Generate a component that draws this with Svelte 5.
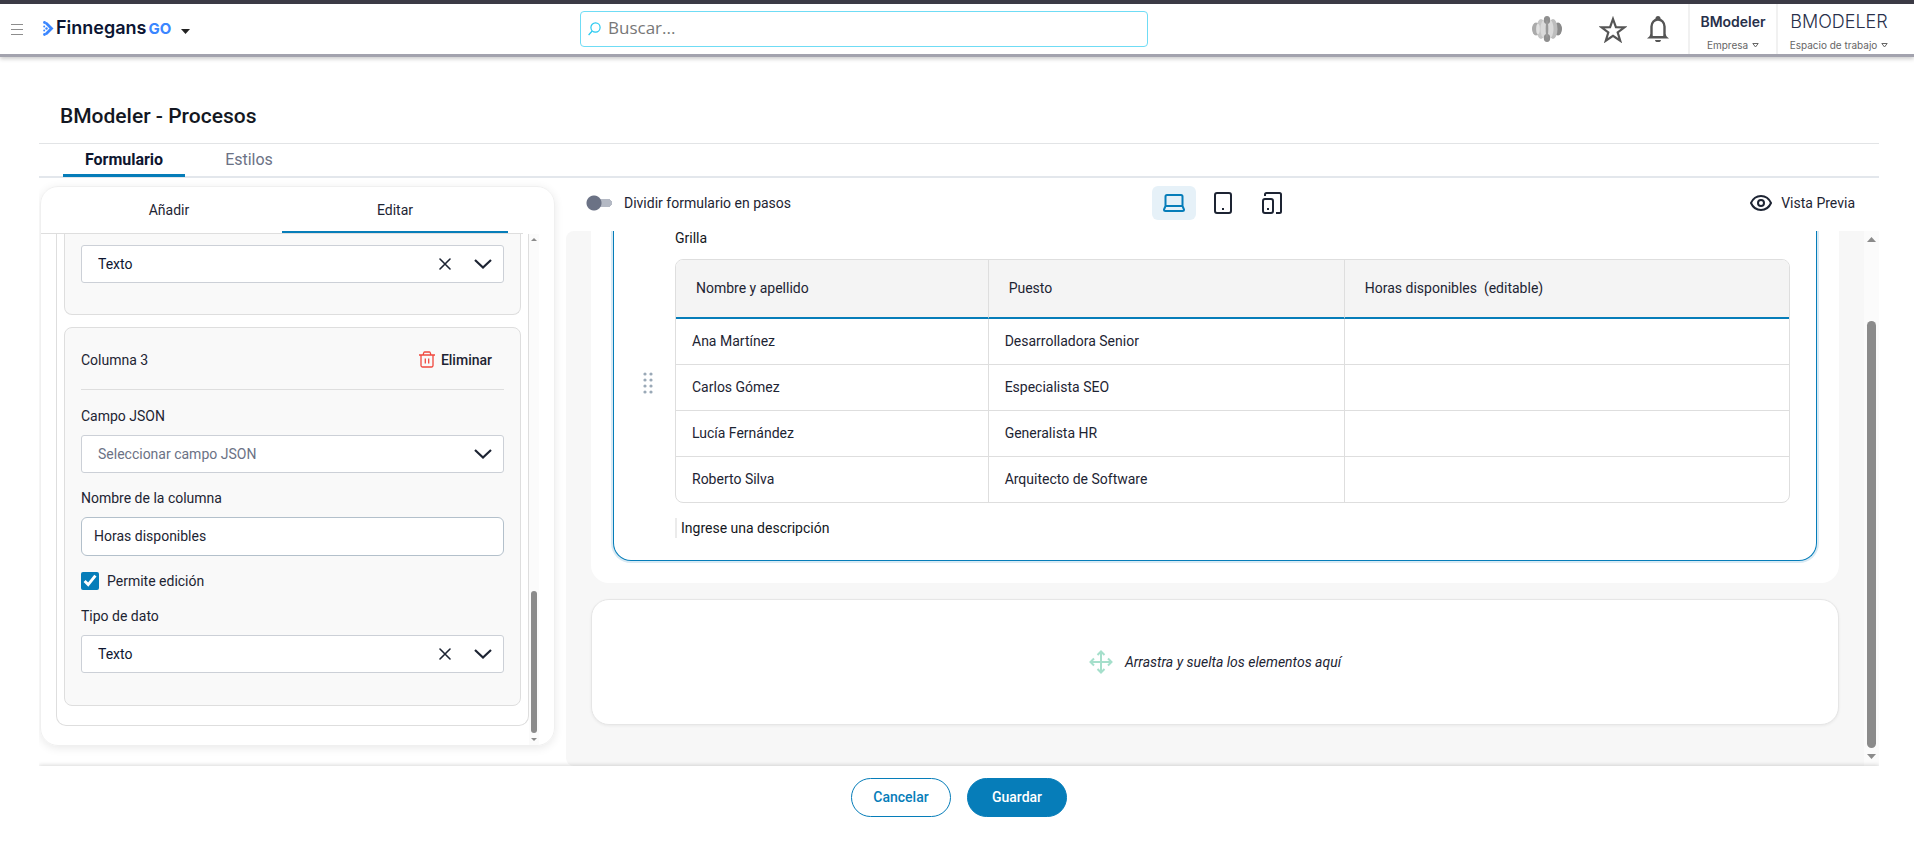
<script lang="ts">
	const topTabs = ['Formulario', 'Estilos'];
	const panelTabs = ['Añadir', 'Editar'];
	const devices = ['laptop', 'tablet', 'devices'];

	const rows = [
		{ name: 'Ana Martínez', role: 'Desarrolladora Senior' },
		{ name: 'Carlos Gómez', role: 'Especialista SEO' },
		{ name: 'Lucía Fernández', role: 'Generalista HR' },
		{ name: 'Roberto Silva', role: 'Arquitecto de Software' }
	];

	let activeTop = $state('Formulario');
	let activePanel = $state('Editar');
	let device = $state('laptop');
	let split = $state(false);
	let columnName = $state('Horas disponibles');
	let editable = $state(true);
	let jsonField = $state('');
	let prevType = $state('texto');
	let dataType = $state('texto');
</script>

{#snippet chevron()}
	<svg class="chevron" width="18" height="10" viewBox="0 0 18 10" aria-hidden="true">
		<path d="M1 1l8 7.500 8-7.500" fill="none" stroke="currentColor" stroke-width="2.200" />
	</svg>
{/snippet}

{#snippet cross()}
	<svg width="12" height="12" viewBox="0 0 12 12" aria-hidden="true">
		<path d="M1 1l10 10M11 1L1 11" stroke="currentColor" stroke-width="1.6" stroke-linecap="round" />
	</svg>
{/snippet}

<header class="topbar">
	<div class="brand">
		<button class="plain menu" aria-label="Menú">
			<svg width="12" height="11" viewBox="0 0 12 11"><path d="M0 .5h12M0 5.500h12M0 10.500h12" stroke="#8d8d8d" /></svg>
		</button>
		<button class="plain logo" aria-label="Finnegans GO">
			<svg width="11" height="15" viewBox="0 0 11 15">
				<path d="M3.500 2.500l5 5-5 5" fill="none" stroke="#3a86ff" stroke-width="2.800" stroke-linecap="round" />
				<circle cx="1.500" cy="1.500" r="1.400" fill="#3a86ff" />
				<circle cx="1.200" cy="5.500" r="1" fill="#3a86ff" />
				<circle cx="3.500" cy="7.500" r="1.200" fill="#3a86ff" />
				<circle cx="1.200" cy="9.500" r="1" fill="#3a86ff" />
				<circle cx="1.500" cy="13.500" r="1.400" fill="#3a86ff" />
			</svg>
			<span class="logo-name">Finnegans</span><span class="logo-go">GO</span>
			<svg class="caret" width="9" height="5" viewBox="0 0 9 5"><path d="M0 0h9L4.500 5z" fill="#222" /></svg>
		</button>
	</div>

	<label class="search">
		<svg width="13" height="14" viewBox="0 0 13 14" aria-hidden="true">
			<circle cx="7.500" cy="5.500" r="4.600" fill="none" stroke="#27c9f0" stroke-width="1.200" />
			<path d="M4.200 9L.6 13" stroke="#27c9f0" stroke-width="1.200" />
		</svg>
		<input type="search" placeholder="Buscar..." aria-label="Buscar" />
	</label>

	<div class="account">
		<svg class="orb" width="30" height="26" viewBox="0 0 30 26" aria-hidden="true">
			<ellipse cx="4" cy="13" rx="4" ry="6.500" fill="#ababab" />
			<ellipse cx="26" cy="13" rx="4" ry="6.500" fill="#8a8a8a" />
			<ellipse cx="9" cy="13" rx="4.500" ry="10" fill="#c6c6c6" />
			<ellipse cx="21" cy="13" rx="4.500" ry="10" fill="#bdbdbd" />
			<ellipse cx="6" cy="13" rx="1.800" ry="5" fill="#e2e2e2" />
			<ellipse cx="12" cy="13" rx="3.500" ry="9" fill="#dadada" />
			<ellipse cx="18" cy="13" rx="3.500" ry="9" fill="#dadada" />
			<ellipse cx="15" cy="4" rx="3.200" ry="4" fill="#8f8f8f" />
			<ellipse cx="15" cy="22" rx="3.200" ry="4" fill="#8f8f8f" />
			<ellipse cx="15" cy="13" rx="1.300" ry="9" fill="#999" />
		</svg>
		<button class="plain star" aria-label="Favoritos">
			<svg width="28" height="27" viewBox="0 0 28 27">
				<path d="M14 3l2.900 8.100 8.600.2-6.800 5.200 2.500 8.200L14 19.800l-7.200 4.900 2.500-8.200-6.800-5.200 8.600-.2z" fill="none" stroke="#555" stroke-width="2.200" />
			</svg>
		</button>
		<button class="plain bell" aria-label="Notificaciones">
			<svg width="22" height="26" viewBox="0 0 22 26">
				<path d="M4.500 20V10.500a6.500 7 0 0 1 13 0V20" fill="none" stroke="#555" stroke-width="2.400" />
				<path d="M0 22.400c1.500-1 3-2.200 3.300-4.400l2.400 2h10.600l2.400-2c.3 2.200 1.800 3.400 3.300 4.400z" fill="#555" />
				<path d="M8.500 4V2.500a2.500 2.500 0 0 1 5 0V4zM8 24h6a3 2.200 0 0 1-6 0z" fill="#555" />
			</svg>
		</button>
		<button class="plain picker company">
			<strong>BModeler</strong>
			<small>Empresa <svg width="7" height="5" viewBox="0 0 7 5"><path d="M.8.5h5.400L3.500 4z" fill="none" stroke="currentColor" /></svg></small>
		</button>
		<button class="plain picker workspace">
			<span>BMODELER</span>
			<small>Espacio de trabajo <svg width="7" height="5" viewBox="0 0 7 5"><path d="M.8.5h5.400L3.500 4z" fill="none" stroke="currentColor" /></svg></small>
		</button>
	</div>
</header>

<main class="page">
	<h1>BModeler - Procesos</h1>

	<nav class="top-tabs">
		{#each topTabs as tab}
			<button class="plain" class:active={activeTop === tab} onclick={() => (activeTop = tab)}>{tab}</button>
		{/each}
	</nav>

	<div class="workarea">
		<aside class="panel">
			<div class="panel-tabs">
				{#each panelTabs as tab}
					<button class="plain" class:active={activePanel === tab} onclick={() => (activePanel = tab)}>{tab}</button>
				{/each}
			</div>
			<div class="panel-body">
				<div class="columns">
					<section class="column-card first">
						<div class="select">
							<select aria-label="Tipo de dato" bind:value={prevType}>
								<option value="texto">Texto</option>
							</select>
							<span class="select-icons">{@render cross()}{@render chevron()}</span>
						</div>
					</section>

					<section class="column-card">
						<div class="column-head">
							<span>Columna 3</span>
							<button class="plain remove">
								<svg width="16" height="17" viewBox="0 0 16 17" aria-hidden="true">
									<path d="M0 4h16M2 4v10.500a1.500 1.500 0 0 0 1.500 1.500h9a1.500 1.500 0 0 0 1.500-1.500V4M4 4l.8-2.400Q5 1 5.800 1h4.400q.8 0 1 .6L12 4M6.300 7.500v5M9.700 7.500v5" fill="none" stroke="#f0483e" stroke-width="1.300" />
								</svg>
								Eliminar
							</button>
						</div>

						<label class="field-label" for="json-field">Campo JSON</label>
						<div class="select">
							<select id="json-field" class="empty" bind:value={jsonField}>
								<option value="">Seleccionar campo JSON</option>
							</select>
							<span class="select-icons">{@render chevron()}</span>
						</div>

						<label class="field-label" for="column-name">Nombre de la columna</label>
						<input id="column-name" class="text-input" type="text" bind:value={columnName} />

						<label class="check">
							<input type="checkbox" bind:checked={editable} />
							<span>Permite edición</span>
						</label>

						<label class="field-label" for="data-type">Tipo de dato</label>
						<div class="select">
							<select id="data-type" bind:value={dataType}>
								<option value="texto">Texto</option>
							</select>
							<span class="select-icons">{@render cross()}{@render chevron()}</span>
						</div>
					</section>
				</div>
				<div class="scrollbar thin" aria-hidden="true">
					<i class="up"></i>
					<i class="thumb"></i>
					<i class="down"></i>
				</div>
			</div>
		</aside>

		<section class="designer">
			<div class="toolbar">
				<label class="switch">
					<input type="checkbox" role="switch" bind:checked={split} />
					<span>Dividir formulario en pasos</span>
				</label>
				<div class="devices">
					{#each devices as item}
						<button class="plain" class:active={device === item} aria-label={item} onclick={() => (device = item)}>
							{#if item === 'laptop'}
								<svg width="22" height="18" viewBox="0 0 22 18">
									<path d="M4 1h14a1.500 1.500 0 0 1 1.500 1.500V12h-17V2.500A1.500 1.500 0 0 1 4 1zM2.500 12h17l1.500 3.500q0 1.500-1.500 1.500h-17Q1 17 1 15.500z" fill="none" stroke="currentColor" stroke-width="2" />
								</svg>
							{:else if item === 'tablet'}
								<svg width="18" height="22" viewBox="0 0 18 22">
									<rect x="1" y="1" width="16" height="20" rx="2" fill="none" stroke="currentColor" stroke-width="2" />
									<path d="M8 16h2v2H8z" fill="currentColor" />
								</svg>
							{:else}
								<svg width="20" height="22" viewBox="0 0 20 22">
									<rect x="1" y="7" width="10" height="14" rx="2" fill="none" stroke="currentColor" stroke-width="2" />
									<path d="M3 4V2.500Q3 1 4.500 1h13Q19 1 19 2.500v17q0 1.500-1.500 1.500H14" fill="none" stroke="currentColor" stroke-width="2" />
									<path d="M5 16h2v2H5z" fill="currentColor" />
								</svg>
							{/if}
						</button>
					{/each}
				</div>
				<button class="plain preview">
					<svg width="22" height="16" viewBox="0 0 22 16" aria-hidden="true">
						<path d="M1 8c2-4.500 5.500-7 10-7s8 2.500 10 7c-2 4.500-5.500 7-10 7S3 12.500 1 8z" fill="none" stroke="currentColor" stroke-width="2" />
						<circle cx="11" cy="8" r="3" fill="none" stroke="currentColor" stroke-width="2" />
					</svg>
					Vista Previa
				</button>
			</div>

			<div class="canvas">
				<div class="sheets">
					<div class="sheet">
						<div class="block">
							<svg class="grip" width="10" height="22" viewBox="0 0 10 22" aria-hidden="true">
								{#each [2, 8, 14, 20] as y}
									<circle cx="2" cy={y} r="1.600" fill="#9aa9b7" />
									<circle cx="8" cy={y} r="1.600" fill="#9aa9b7" />
								{/each}
							</svg>
							<div class="block-content">
								<div class="block-title">Grilla</div>
								<table>
									<colgroup><col class="c-name" /><col class="c-role" /><col /></colgroup>
									<thead>
										<tr>
											<th>Nombre y apellido</th>
											<th>Puesto</th>
											<th>Horas disponibles &nbsp;(editable)</th>
										</tr>
									</thead>
									<tbody>
										{#each rows as row}
											<tr>
												<td>{row.name}</td>
												<td>{row.role}</td>
												<td></td>
											</tr>
										{/each}
									</tbody>
								</table>
								<div class="description">Ingrese una descripción</div>
							</div>
						</div>
					</div>

					<div class="dropzone">
						<svg width="24" height="24" viewBox="0 0 24 24" aria-hidden="true">
							<path d="M12 2v20M2 12h20M8.500 5L12 1.500 15.500 5M8.500 19l3.500 3.500 3.500-3.500M5 8.500L1.500 12 5 15.500M19 8.500l3.500 3.500-3.500 3.500" fill="none" stroke="#a5dfcb" stroke-width="2" />
						</svg>
						<em>Arrastra y suelta los elementos aquí</em>
					</div>
				</div>
				<div class="scrollbar" aria-hidden="true">
					<i class="up"></i>
					<i class="thumb"></i>
					<i class="down"></i>
				</div>
			</div>
		</section>
	</div>

	<footer class="actions">
		<button class="btn">Cancelar</button>
		<button class="btn primary">Guardar</button>
	</footer>
</main>

<style>
	:global(body) {
		margin: 0;
		background: #fff;
		color: #1d2433;
		font-family: Roboto, 'Liberation Sans', sans-serif;
		font-size: 14px;
		line-height: 20px;
	}

	:global(*) {
		box-sizing: border-box;
	}

	svg {
		display: block;
		flex: none;
	}

	button,
	input,
	select {
		font: inherit;
		color: inherit;
	}

	.plain {
		border: 0;
		padding: 0;
		background: none;
		cursor: pointer;
	}

	/* ── Top bar ── */
	.topbar {
		display: grid;
		grid-template-columns: 569px 568px 1fr;
		align-items: center;
		height: 57px;
		padding: 0 18px 0 11px;
		border-top: 4px solid #3b3a45;
		border-bottom: 3px solid #a3a3ae;
		box-shadow: 0 2px 4px rgba(0, 0, 0, 0.2);
	}

	.brand {
		display: flex;
		align-items: center;
		gap: 20px;
	}

	.logo {
		display: flex;
		align-items: center;
		padding-bottom: 2px;
		font-family: Inter, sans-serif;
		font-size: 18px;
		font-weight: 600;
	}

	.logo-name {
		margin-left: 2px;
		color: #0b1533;
	}

	.logo-go {
		margin: 2px 0 0 2px;
		font-size: 15px;
		font-weight: 700;
		color: #3a86ff;
	}

	.caret {
		margin: 6px 0 0 10px;
	}

	.search {
		display: flex;
		align-items: center;
		gap: 7px;
		height: 36px;
		padding-left: 7px;
		border: 1px solid #6fdcf5;
		border-radius: 4px;
	}

	.search input {
		flex: 1;
		min-width: 0;
		padding: 0 0 2px;
		border: 0;
		outline: 0;
		background: none;
		font-family: 'Open Sans', sans-serif;
		font-size: 17px;
	}

	.search input::placeholder {
		color: #777;
		opacity: 1;
	}

	.account {
		display: flex;
		align-items: center;
		justify-content: flex-end;
		height: 50px;
		font-family: Inter, sans-serif;
	}

	.star {
		margin-left: 37px;
	}

	.bell {
		margin: 0 19px 0 20px;
	}

	.picker {
		display: flex;
		flex-direction: column;
		align-items: center;
		align-self: stretch;
		padding-top: 8px;
		border-left: 2px solid #f1f1f1;
		white-space: nowrap;
	}

	.picker strong {
		font-size: 14px;
		font-weight: 600;
		color: #28304a;
	}

	.picker span {
		font-size: 18px;
		font-weight: 300;
		color: #28304a;
	}

	.picker small {
		display: flex;
		align-items: center;
		gap: 4px;
		margin-top: 4px;
		font-size: 10px;
		line-height: 18px;
		color: #666;
	}

	.company {
		width: 88px;
	}

	.workspace {
		width: 120px;
		padding-left: 4px;
	}

	/* ── Page ── */
	.page {
		padding: 0 35px 0 39px;
	}

	h1 {
		margin: 0;
		padding: 45px 21px 13px;
		font-size: 21px;
		font-weight: 500;
		line-height: 28px;
		color: #131722;
	}

	.top-tabs {
		display: flex;
		height: 35px;
		padding-left: 24px;
		border-top: 1px solid #e2e4e6;
		border-bottom: 2px solid #e3e7ec;
	}

	.top-tabs button {
		width: 122px;
		height: 33px;
		padding-top: 1px;
		border-bottom: 3px solid transparent;
		font-size: 16px;
		color: #6b7285;
	}

	.top-tabs button + button {
		margin-left: 3px;
	}

	.top-tabs button.active {
		border-bottom-color: #067db9;
		font-weight: 700;
		color: #0e1630;
	}

	.workarea {
		display: grid;
		grid-template-columns: minmax(0, 515px) minmax(0, 1fr);
		column-gap: 11px;
		height: 588px;
		padding-left: 1px;
		overflow: hidden;
	}

	/* ── Column editor ── */
	.panel {
		display: flex;
		flex-direction: column;
		height: 560px;
		margin-top: 8px;
		border: 1px solid #f0f0f0;
		border-radius: 18px;
		box-shadow: 0 2px 10px rgba(0, 0, 0, 0.09);
	}

	.panel-tabs {
		display: flex;
		flex: none;
		height: 47px;
		margin-right: 31px;
		padding: 0 15px;
		border-bottom: 1px solid #dedede;
	}

	.panel-tabs button {
		flex: 1;
		padding-top: 2px;
		border-bottom: 2px solid transparent;
	}

	.panel-tabs button.active {
		border-bottom-color: #067db9;
	}

	.panel-body {
		display: flex;
		flex: 1;
		min-height: 0;
		padding: 0 15px;
	}

	.columns {
		flex: 1;
		height: 492px;
		padding: 0 7px;
		border: 1px solid #dedede;
		border-top: 0;
		border-radius: 0 0 10px 10px;
	}

	.column-card {
		height: 379px;
		padding: 16px;
		border: 1px solid #dedede;
		border-radius: 8px;
		background: #f9f9f9;
	}

	.column-card.first {
		height: 81px;
		margin-bottom: 12px;
		padding-top: 11px;
		border-top: 0;
		border-radius: 0 0 8px 8px;
	}

	.select {
		position: relative;
		height: 38px;
	}

	.select select {
		width: 100%;
		height: 38px;
		padding: 0 16px;
		border: 1px solid #ccd0d7;
		border-radius: 3px;
		background: #fff;
		appearance: none;
		color: #0e1630;
	}

	.select select.empty {
		color: #6b7285;
	}

	.select-icons {
		position: absolute;
		inset: 0 12px 0 auto;
		display: flex;
		align-items: center;
		gap: 23px;
		color: #1d2433;
		pointer-events: none;
	}

	.column-head {
		display: flex;
		align-items: center;
		justify-content: space-between;
		height: 46px;
		padding: 0 12px 14px 0;
		margin-bottom: 16px;
		border-bottom: 1px solid #dedede;
	}

	.remove {
		display: flex;
		align-items: center;
		gap: 6px;
		font-weight: 500;
	}

	.field-label {
		display: block;
		margin-bottom: 9px;
	}

	.select + .field-label {
		margin-top: 15px;
	}

	.text-input {
		display: block;
		width: 100%;
		height: 39px;
		padding: 0 12px 2px;
		border: 1px solid #b3c0cb;
		border-radius: 6px;
		background: #fff;
	}

	.check {
		display: flex;
		align-items: center;
		gap: 8px;
		height: 20px;
		margin: 15px 0;
	}

	.check input {
		width: 18px;
		height: 18px;
		margin: 0;
		accent-color: #067db9;
	}

	/* ── Scrollbars ── */
	.scrollbar {
		display: flex;
		flex: none;
		flex-direction: column;
		align-items: center;
		width: 15px;
		padding: 6px 0 7px;
		background: #fbfbfb;
	}

	.scrollbar i {
		width: 9px;
		height: 5px;
		background: #8b8b8b;
	}

	.scrollbar .up {
		clip-path: polygon(50% 0, 100% 100%, 0 100%);
	}

	.scrollbar .down {
		clip-path: polygon(0 0, 100% 0, 50% 100%);
	}

	.scrollbar .thumb {
		height: 427px;
		margin: auto 0 6px;
		border-radius: 5px;
	}

	.scrollbar.thin {
		width: 10px;
		padding: 4px 0;
	}

	.scrollbar.thin i {
		width: 6px;
		height: 3px;
	}

	.scrollbar.thin .thumb {
		height: 142px;
		margin-bottom: 5px;
	}

	/* ── Designer ── */
	.designer {
		display: flex;
		flex-direction: column;
		min-width: 0;
	}

	.toolbar {
		display: grid;
		grid-template-columns: 1fr auto 1fr;
		align-items: center;
		height: 53px;
		padding: 0 20px 3px;
	}

	.switch {
		display: flex;
		align-items: center;
		gap: 12px;
	}

	.switch input {
		width: 26px;
		height: 16px;
		margin: 0;
		appearance: none;
		background:
			radial-gradient(circle at 8px 8px, #6b7285 7px, transparent 8px),
			linear-gradient(#b4b9c4, #b4b9c4) 8px 4px / 14px 8px no-repeat,
			radial-gradient(circle at 22px 8px, #b4b9c4 4px, transparent 4px);
	}

	.switch input:checked {
		transform: scaleX(-1);
	}

	.devices {
		display: flex;
		gap: 5px;
	}

	.devices button {
		display: grid;
		place-items: center;
		width: 44px;
		height: 34px;
		border-radius: 6px;
	}

	.devices button.active {
		background: #e6f1f8;
		color: #067db9;
	}

	.preview {
		display: flex;
		align-items: center;
		justify-self: end;
		gap: 9px;
		padding-right: 4px;
	}

	.canvas {
		display: flex;
		flex: 1;
		min-height: 0;
		overflow: hidden;
		border-radius: 8px 0 0 8px;
		background: #f7f7f7;
	}

	.sheets {
		flex: 1;
		min-width: 0;
		padding: 0 25px;
	}

	.sheet {
		height: 352px;
		margin-bottom: 16px;
		padding: 0 22px 22px;
		border-radius: 0 0 18px 18px;
		background: #fff;
	}

	.block {
		display: flex;
		align-items: center;
		height: 330px;
		padding: 0 26px 0 29px;
		border: 1px solid #067db9;
		border-top: 0;
		border-radius: 0 0 18px 18px;
		box-shadow: 0 0 0 2px #d9eaf4;
	}

	.grip {
		margin-right: 22px;
		margin-bottom: 26px;
	}

	.block-content {
		flex: 1;
		align-self: flex-start;
	}

	.block-title {
		height: 28px;
		line-height: 14px;
		color: #131722;
	}

	table {
		width: 100%;
		table-layout: fixed;
		border: 1px solid #dedede;
		border-radius: 8px;
		border-spacing: 0;
		overflow: hidden;
	}

	.c-name {
		width: 28%;
	}

	.c-role {
		width: 32%;
	}

	th {
		height: 59px;
		padding: 0 20px 2px;
		border-bottom: 2px solid #067db9;
		background: #f4f4f4;
		font-weight: 400;
		text-align: left;
	}

	td {
		height: 46px;
		padding: 0 16px 2px;
		border-bottom: 1px solid #dedede;
	}

	th + th,
	td + td {
		border-left: 1px solid #dedede;
	}

	tbody tr:last-child td {
		height: 45px;
		border-bottom: 0;
	}

	.description {
		margin-top: 15px;
		padding-left: 4px;
		border-left: 2px solid #ebebeb;
		color: #131722;
	}

	.dropzone {
		display: flex;
		align-items: center;
		justify-content: center;
		gap: 12px;
		height: 126px;
		border: 1px solid #e6e6e6;
		border-radius: 18px;
		background: #fff;
		box-shadow: 0 1px 3px rgba(0, 0, 0, 0.06);
	}

	/* ── Footer ── */
	.actions {
		position: relative;
		display: flex;
		justify-content: center;
		gap: 16px;
		padding: 12px 0;
		background: #fff;
		box-shadow: 0 -1px 4px rgba(0, 0, 0, 0.15);
		clip-path: inset(-8px 0 0 0);
	}

	.btn {
		width: 100px;
		height: 39px;
		padding: 0 0 2px;
		border: 1px solid #067db9;
		border-radius: 20px;
		background: #fff;
		font-weight: 500;
		color: #067db9;
		cursor: pointer;
	}

	.btn.primary {
		background: #067db9;
		color: #fff;
	}
</style>
